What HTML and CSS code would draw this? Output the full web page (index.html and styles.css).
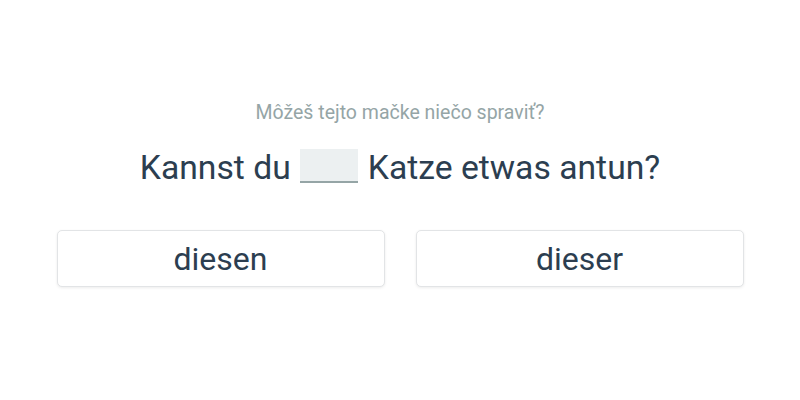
FILE: index.html
```html
<!DOCTYPE html>
<html lang="de">
<head>
<meta charset="utf-8">
<link rel="stylesheet" href="styles.css">
</head>
<body>
<main class="exercise">
  <p class="hint">Môžeš tejto mačke niečo spraviť?</p>
  <p class="sentence"><span>Kannst du</span><span class="blank"></span><span>Katze etwas antun?</span></p>
  <div class="choices">
    <button class="choice">diesen</button>
    <button class="choice">dieser</button>
  </div>
</main>
</body>
</html>
```
FILE: styles.css
```css
html, body {
  margin: 0;
  padding: 0;
  background: #ffffff;
  font-family: Roboto, "Noto Sans", sans-serif;
}
.exercise {
  width: 800px;
  height: 400px;
  box-sizing: border-box;
  padding-top: 100px;
  display: flex;
  flex-direction: column;
  align-items: center;
}
.hint {
  margin: 0;
  font-size: 19.5px;
  line-height: 26px;
  color: #95a5a6;
}
.sentence {
  margin: 22px 0 0;
  font-size: 33.7px;
  line-height: 40px;
  color: #2c3e50;
  display: flex;
  align-items: center;
}
.blank {
  display: block;
  width: 58px;
  height: 32px;
  background: #ecf0f1;
  border-bottom: 2px solid #95a5a6;
  margin: 0 10px 5px 9px;
}
.choices {
  margin-top: 42px;
  display: flex;
  gap: 31px;
}
.choice {
  width: 328px;
  height: 57px;
  box-sizing: border-box;
  background: #ffffff;
  border: 1px solid #e2e4e6;
  border-radius: 5px;
  box-shadow: 0 1px 3px rgba(0, 0, 0, 0.08);
  font-family: Roboto, "Noto Sans", sans-serif;
  font-size: 32px;
  color: #2c3e50;
  padding: 0;
  cursor: pointer;
}
```
